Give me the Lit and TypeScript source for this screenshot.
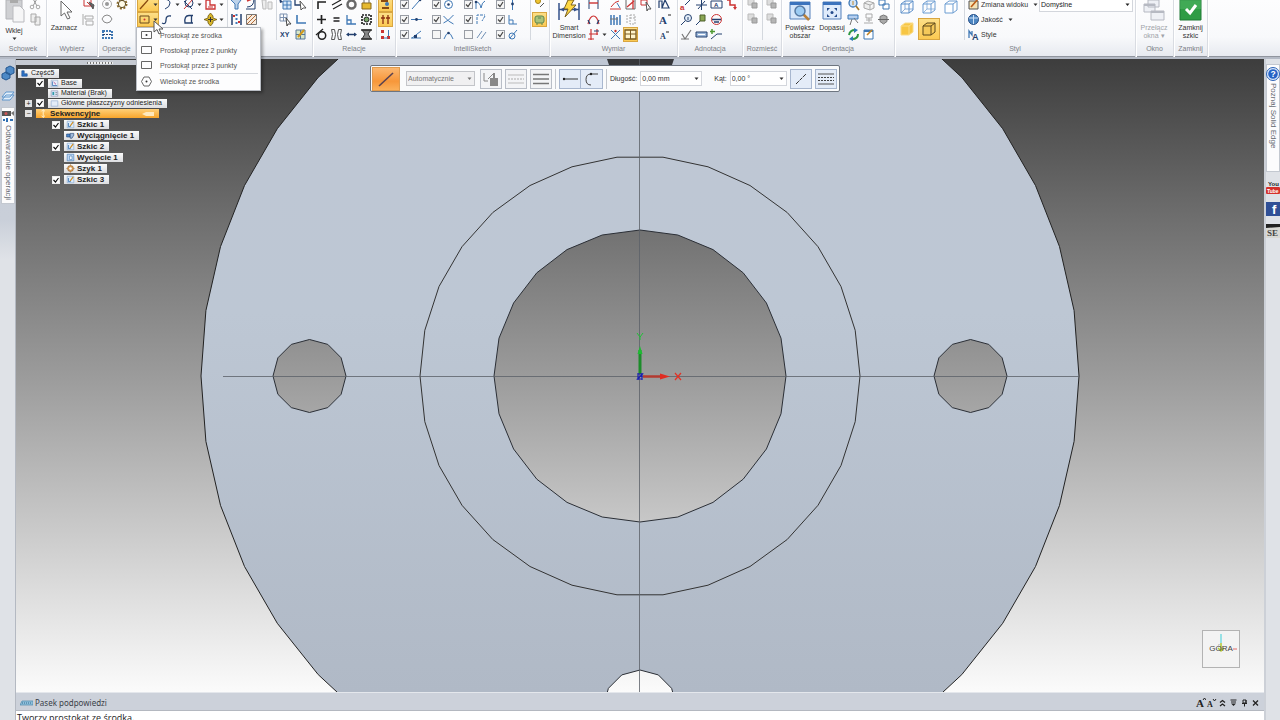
import { LitElement, html, css, svg, nothing } from "lit";
import { customElement } from "lit/decorators.js";
import { classMap } from "lit/directives/class-map.js";

const N = "#24406e";
const B = "#3f78b5";
const R = "#cc3333";

// Glyphs drawn on a 15 x 15 grid.
const glyphs: Record<string, unknown> = {
  none: nothing,
  cut: svg`<path d="M4 0l5 9M10 0L5 9" stroke="#999"/><circle cx="4" cy="10" r="1.8" stroke="#aaa"/><circle cx="10" cy="10" r="1.8" stroke="#aaa"/>`,
  copy: svg`<path d="M3 2h5v8h-5zM7 5h5v8h-5z" fill="#eee" stroke="#aaa"/>`,
  pick: svg`<path d="M3 2h7v7h-7zM6 5l6 6" stroke="${R}"/><path d="M8 5l4 7 1-4z" fill="#666" stroke="#555"/>`,
  stack: svg`<path d="M2 2v11M4 4h8v3h-8zM5 9h7v4h-7z" stroke="#aaa"/>`,
  ring: svg`<circle cx="7" cy="7" r="4.5" stroke="#aaa"/><circle cx="7" cy="7" r="2" fill="#999" stroke="none"/>`,
  gear: svg`<circle cx="7" cy="7" r="4.5" stroke="#8a6a2a" stroke-width="2" stroke-dasharray="2 1.5"/><circle cx="7" cy="7" r="3.6" stroke="#5b4a22" fill="#fffbe8" stroke-width="1"/>`,
  hexa: svg`<path d="M7 3l3 1 2 3-2 3-3 1-3-1-2-3 2-3z" stroke="#888"/>`,
  pattern: svg`<path d="M3 4h9v7h-9z" stroke="${B}" stroke-width="2" stroke-dasharray="2 1"/><path d="M3 7.500h9" stroke="${N}" stroke-dasharray="2 1"/>`,
  line: svg`<path d="M3 12L11 3" stroke="#8a4a10" stroke-width="1.300"/>`,
  rect: svg`<path d="M3 4h9v7h-9z" stroke="#6b4a1c"/><circle cx="7.500" cy="7.500" r="1" fill="${R}" stroke="none"/>`,
  arc: svg`<path d="M3 2q8 0 8 4t-5 6" stroke="${N}"/><path d="M2 1h2v2h-2z" fill="${B}" stroke="none"/>`,
  curve: svg`<path d="M3 11q4 2 4-3t5-4" stroke="${N}" stroke-width="1.300"/>`,
  circ: svg`<circle cx="8" cy="6" r="4" stroke="${N}"/><path d="M3 12l9-10" stroke="${R}"/><path d="M3 4l8 8" stroke="${N}"/>`,
  dee: svg`<path d="M12 3.500h-4q-5 0-4 7.500h8M10.500 4v7" stroke="${N}" stroke-width="1.300"/>`,
  offset: svg`<path d="M3 12v-9h4v5h5v4z" stroke="${R}" stroke-width="1.300"/><path d="M5 10h5" stroke="${R}"/>`,
  move: svg`<path d="M7.500 1l2.500 3v2l4 1.500-4 1.500v2l-2.500 3-2.500-3V9L1 7.500 5 6V4z" fill="#d8b52a" stroke="#6e5a10" stroke-width=".8"/><path d="M5 7.500h5M7.500 5v5" stroke="#333"/>`,
  funnel: svg`<path d="M2 3q5-3 10 0l-3 4v5h-3V7z" fill="#bcd2ea" stroke="${B}"/>`,
  bounds: svg`<path d="M3 2v11M12 2v11" stroke="${N}" stroke-width="1.500"/><path d="M7.500 2v11" stroke="${B}" stroke-width="2" stroke-dasharray="2 2"/><path d="M4 4h2M9 10h2" stroke="${R}" stroke-width="2"/>`,
  fillet: svg`<path d="M2 12h9V3M3 10q7 0 7-8" stroke="${N}"/><path d="M3 4l5-2" stroke="${R}" stroke-width="1.500"/>`,
  hatch: svg`<path d="M2.500 2.500h10v10h-10z" fill="#f7ebdd" stroke="#777"/><path d="M3 8l5-5M3 12l9-9M7 12l5-5" stroke="#b06a3a"/>`,
  planes: svg`<path d="M3 3h4v9h-3zM9 5h4v7h-4z" stroke="#bbb" fill="#eee"/>`,
  tableArrow: svg`<path d="M5 4h8v8h-8zM5 8h8M9 4v8" fill="#d5e6f8" stroke="${B}"/><path d="M1 1l4 4-3 1z" fill="${N}" stroke="none"/>`,
  angleArrow: svg`<path d="M2 2v6h6" stroke="${N}" stroke-width="1.300"/><path d="M7 4l6 7-3 0-2 2z" fill="#fff" stroke="#555"/>`,
  gridArrow: svg`<path d="M2 2h7v7h-7zM5.500 2v7M2 5.500h7" stroke="#7f93b0"/><path d="M8 6l5 6h-3l-1 2z" fill="#fff" stroke="#444"/>`,
  axis: svg`<path d="M4 3v8h9" stroke="${B}" stroke-width="1.600"/>`,
  xy: svg`<text x="2" y="10" font-size="7" font-weight="700" fill="${N}" stroke="none">XY</text>`,
  sketch: svg`<path d="M3 3h9v9h-9zM3 7.500h9M7.500 3v9" fill="#d9e7c9" stroke="#56769a"/><path d="M5 10l6-7" stroke="#d29a1c" stroke-width="2"/>`,
  corner: svg`<path d="M4 12V5h8" stroke="#222" stroke-width="1.600"/>`,
  parallel: svg`<path d="M3 8l9-5M4 12l9-5" stroke="#222" stroke-width="1.200"/>`,
  donut: svg`<circle cx="7.500" cy="7.500" r="4" stroke="#6a6a6a" stroke-width="2.500"/>`,
  lock: svg`<path d="M5 6V2h5v4" stroke="#6a6a6a"/><path d="M3 6h9v6h-9z" fill="#e6ba30" stroke="#896819"/>`,
  plus: svg`<path d="M7.500 3v9M3 7.500h9" stroke="#222" stroke-width="1.700"/>`,
  equals: svg`<path d="M4.500 6h6M4.500 9h6" stroke="#222" stroke-width="1.500"/>`,
  perp: svg`<path d="M3 3v9h9M7 12V8h-4" stroke="${B}" stroke-width="1.300"/>`,
  rigid: svg`<path d="M3 3h9v9h-9z" stroke="#222" stroke-width="1.700" stroke-dasharray="2 1"/><circle cx="7.500" cy="7.500" r="2.500" fill="#79a86a" stroke="#222"/>`,
  tangent: svg`<circle cx="8" cy="8.500" r="3.700" stroke="#222" stroke-width="1.500"/><path d="M2 8l7-6" stroke="#222" stroke-width="1.300"/>`,
  symm: svg`<path d="M2.500 2.500h3l1 5-1 5h-3l1-5zM12.500 2.500h-3l-1 5 1 5h3l-1-5z" stroke="#555"/>`,
  horiz: svg`<path d="M3 7.500h9" stroke="${N}" stroke-width="1.500"/><path d="M2 7.500l3-2v4zM13 7.500l-3-2v4z" fill="${N}" stroke="none"/>`,
  bow: svg`<path d="M3 3h9l-3 4 3 5h-9l3-5z" fill="#888" stroke="#333"/><path d="M2 3h11M2 12h11" stroke="#333" stroke-width="1.500"/>`,
  handles: svg`<path d="M3 4h7M4 11h7" stroke="#8a4a10" stroke-width="2"/><circle cx="9" cy="7" r="2" fill="${B}" stroke="none"/>`,
  updown: svg`<path d="M5 3v9M10 3v9M3 6h4M8 6h4" stroke="#8b2f10" stroke-width="1.300"/>`,
  dots: svg`<path d="M3 3h3v3h-3zM3 9h3v3h-3zM9 9h3v3h-3z" fill="${R}" stroke="none"/><path d="M10.500 3v6M6 11h4" stroke="${B}"/>`,
  endpt: svg`<path d="M3 12l7-8" stroke="${B}"/><circle cx="11" cy="3" r="1.300" fill="${N}" stroke="none"/>`,
  midpt: svg`<path d="M2 7.500h11" stroke="${B}"/><circle cx="7.500" cy="7.500" r="1.400" fill="${N}" stroke="none"/>`,
  onpt: svg`<path d="M3 11l9-7M2 11h10" stroke="${B}"/><path d="M5 8h3v3h-3z" fill="${N}" stroke="none"/>`,
  center: svg`<circle cx="7.500" cy="7.500" r="4" stroke="${B}"/><circle cx="7.500" cy="7.500" r="1.300" fill="${N}" stroke="none"/>`,
  cross: svg`<path d="M2.500 4q5 6 10 8M2.500 11q5-2 10-8" stroke="${B}"/>`,
  hump: svg`<path d="M3 12q4.500-12 9 0" stroke="${B}"/><circle cx="7.500" cy="6" r="1.300" fill="${N}" stroke="none"/>`,
  spline: svg`<path d="M3 12V5q4 0 5 6 1-6 4-7" stroke="${B}"/><circle cx="3" cy="5" r="1.300" fill="${N}" stroke="none"/>`,
  ext: svg`<path d="M4 12V3h8M12 4l-3 5" stroke="${B}" stroke-dasharray="3 1"/>`,
  lines2: svg`<path d="M4 11l5-7M8 12l5-7" stroke="#6f8fb5"/>`,
  vert: svg`<path d="M7.500 1v12" stroke="${B}"/><circle cx="7.500" cy="7" r="1.400" fill="${N}" stroke="none"/>`,
  sq: svg`<path d="M4 3v9h8M4 8h4v4" stroke="${B}"/>`,
  tan2: svg`<circle cx="7" cy="9" r="3" stroke="${B}"/><path d="M5 11l7-8" stroke="${B}"/>`,
  bulb: svg`<circle cx="6" cy="4" r="2.500" fill="#f0c530" stroke="#a8841a"/><path d="M8 10l4-4" stroke="#555"/>`,
  relay: svg`<rect x="3" y="4" width="9" height="7" rx="2" fill="#a9c27a" stroke="#5e8750"/><path d="M5 11v2M10 11v2M6 6h3" stroke="#5e8750"/>`,
  dist: svg`<path d="M3 3v9M12 3v9" stroke="${N}"/><path d="M3 6h9" stroke="${R}" stroke-width="1.400"/>`,
  angDim: svg`<path d="M2 12q2-8 5.500-8t5.500 8" stroke="${R}" stroke-width="1.200"/><path d="M2 8l2 4M13 8l-2 4" stroke="${N}" stroke-width="1.300"/>`,
  coord: svg`<path d="M5 2v11M11 2v6M3 7h9M2 12h6" stroke="${R}" stroke-width="1.200"/><path d="M8 4h5" stroke="${N}"/>`,
  red1: svg`<path d="M2 12h11M3 10q4-6 8-6" stroke="${R}"/><path d="M9 6l3 5" stroke="${B}"/>`,
  red2: svg`<path d="M3 2h9v10h-9z" stroke="#666"/><path d="M4 10l7-6M10 1v11" stroke="${R}" stroke-width="1.300"/>`,
  red3: svg`<path d="M3 3h6v5h-6z" stroke="${R}"/><path d="M8 5l5 7h-3l-1 2z" fill="#fff" stroke="#555"/>`,
  bars: svg`<path d="M3 3v10M6 3v10M9 5v8M12 3v10" stroke="${B}" stroke-width="1.500"/><path d="M2 7h8" stroke="#777"/>`,
  ghost: svg`<path d="M4 3v9M7 6h5M7 3h5v9h-5z" stroke="#aaa" stroke-dasharray="2 1"/>`,
  xdim: svg`<path d="M3 3l9 9M12 3l-9 9" stroke="${B}"/><circle cx="7.500" cy="4" r="1.200" fill="${R}" stroke="none"/>`,
  win: svg`<path d="M2 3h11v9h-11z" fill="#fff4cb" stroke="#7a5a20" stroke-width="1.300"/><path d="M7.500 3v9M2 7h11" stroke="#7a5a20"/>`,
  abc: svg`<path d="M2 11V4h3v7M8 3l4 8h-7z" stroke="${N}" stroke-width="1.200"/>`,
  bigA: svg`<text x="2" y="12" font-size="11" font-weight="700" font-family="Liberation Serif, serif" fill="${N}" stroke="none">A</text><path d="M11 3h3" stroke="#222"/>`,
  smallA: svg`<text x="3" y="12" font-size="8" font-weight="700" font-family="Liberation Serif, serif" fill="${N}" stroke="none">A</text><path d="M9 5h3" stroke="#222"/>`,
  leader: svg`<text x="1" y="13" font-size="8" font-weight="700" fill="${R}" stroke="none">a</text><path d="M6 8l6-6" stroke="${N}"/>`,
  compass: svg`<path d="M2 8h11M7.500 3v10M4 12l7-8" stroke="${N}"/>`,
  frame: svg`<path d="M2 4h11v7h-11z" stroke="${N}"/><text x="5" y="10" font-size="6" font-weight="700" fill="${N}" stroke="none">A</text>`,
  zig: svg`<path d="M3 3h3v5h5v3" stroke="${R}" stroke-width="1.500"/><path d="M9 10h4l-2 3z" fill="${R}" stroke="none"/>`,
  balloon: svg`<circle cx="9" cy="6" r="3.500" fill="#e5effa" stroke="${N}"/><path d="M6 9l-4 4M9 5v3" stroke="${N}"/>`,
  pin: svg`<path d="M6 3h5v6h-5z" fill="#8aa653" stroke="#4c5f2b"/><path d="M6 9l-4 4" stroke="${N}"/>`,
  datum: svg`<circle cx="7.500" cy="7.500" r="5" stroke="${R}"/><path d="M3 7.500h9M5 10h5" stroke="${N}" stroke-width="1.400"/>`,
  surf: svg`<path d="M3 7l3 5 6-9M2 12h8" stroke="#777" stroke-width="1.200"/>`,
  label: svg`<path d="M2 5h11v5h-11z" fill="#9bb6d8" stroke="${N}"/><path d="M4 7.500h7" stroke="#fff"/>`,
  weld: svg`<path d="M2 12l6-5h5" stroke="${N}"/><path d="M3 2v5M1 4.500h5" stroke="#4f9a32" stroke-width="1.500"/>`,
  layer: svg`<path d="M3 2h6v6h-6z" fill="#ddd" stroke="#bbb"/><path d="M7 6h5v5h-5z" fill="#b5b5b5" stroke="#999"/>`,
  zoomGlass: svg`<circle cx="7" cy="6" r="4" fill="#cfe3f8" stroke="${B}" stroke-width="1.300"/><path d="M10 9l3 4" stroke="#a77a2b" stroke-width="1.700"/><path d="M7 4v4" stroke="#c48a2b"/>`,
  greybox: svg`<path d="M3 6l4-2 6 2-4 2zM3 6v5l6 2V8M9 13l4-2V6" fill="#eee" stroke="#aaa"/>`,
  views: svg`<path d="M3 3h6v5h-6zM7 7h6v5h-6z" fill="#fff" stroke="${B}"/>`,
  table: svg`<path d="M2 3h10v4h-10z" fill="#b5cff0" stroke="${B}"/><path d="M6 7l-2 6M8 6l4 5" stroke="#777"/>`,
  chairs: svg`<path d="M5 2h6v4h-6zM3 11h9M8 6v4M5 8h6" stroke="#aaa"/>`,
  orbit: svg`<path d="M7.500 3l3.500 1.500v5l-3.500 2.500-3.500-2.500v-5z" fill="#aaa" stroke="#777"/><path d="M2 7.500h11" stroke="#666"/>`,
  spin: svg`<path d="M3 8q1-5 6-5M12 7q0 5-6 5" stroke="#2f9842" stroke-width="2"/><path d="M8 1l4 2-4 3zM7 9l-4 3 4 2z" fill="#2f79b5" stroke="none"/>`,
  paint: svg`<path d="M3 3h9v9h-9z" fill="#fff" stroke="${B}"/><path d="M3 4h9" stroke="${B}" stroke-width="2"/><path d="M6 8l5-5" stroke="#c28222" stroke-width="1.600"/>`,
  viewSet: svg`<path d="M3 4h9v8h-9z" fill="#f5e3b5" stroke="#555"/><path d="M5 10l7-8" stroke="#bc5c18" stroke-width="1.600"/>`,
  globe: svg`<circle cx="7.500" cy="7.500" r="5" fill="#4d86c2" stroke="#274f87"/><path d="M7.500 3v9M3 6h9" stroke="#cfe2f7"/>`,
  styleA: svg`<text x="6" y="13" font-size="9" font-weight="700" fill="${N}" stroke="none">A</text><path d="M3 11V4l3 4V4" stroke="${B}" stroke-width="1.300"/>`,
  mRect: svg`<path d="M2.500 3.500h10v7h-10z" stroke="#666"/>`,
  mRectC: svg`<path d="M2.500 3.500h10v7h-10z" stroke="#666"/><circle cx="7.500" cy="7" r="1" fill="#333" stroke="none"/>`,
  mHex: svg`<path d="M5 3h5l2.500 4.500-2.500 4.500h-5L2.500 7.500z" stroke="#666"/><circle cx="7.500" cy="7.500" r="1" fill="#333" stroke="none"/>`,
  part: svg`<path d="M3 3h4v5h5v4h-9z" fill="#2d72c4" stroke="#1a4d94"/>`,
  base: svg`<path d="M2 2h11v11h-11z" fill="#e6eefa" stroke="#8fa7c8"/><path d="M4 11V4M4 11h8" stroke="${B}" stroke-width="1.500"/><path d="M6 5l4 4" stroke="#b0458a" stroke-width="1.500"/>`,
  mat: svg`<path d="M2 3h11v9h-11z" fill="#dceafb" stroke="#88a"/><path d="M4 5h3v5h-3z" fill="#39a" stroke="none"/><path d="M9 6h3M9 9h3" stroke="#555"/>`,
  plane: svg`<path d="M2 3h11v9h-11z" fill="#e4ecf8" stroke="#8ba6cf"/>`,
  sk: svg`<path d="M2 2h11v11h-11z" fill="#dcebfb" stroke="#7fa4cf"/><path d="M4 11V5M4 11h4" stroke="${B}" stroke-width="1.500"/><path d="M7 10l5-7" stroke="#d18c1f" stroke-width="2"/>`,
  extrude: svg`<path d="M1 5h6v5h-6z" fill="#4b87ca" stroke="#1e3f72"/><path d="M7 4h6v3l-3 5h-3z" fill="#9fb9d9" stroke="#1e3f72"/>`,
  cutout: svg`<path d="M2 2h11v11h-11z" fill="#bed6f3" stroke="${B}"/><path d="M6 5h4v6h-4z" fill="#fff" stroke="${B}"/>`,
  ptn: svg`<path d="M7.500 1l2 2.500h2v2L14 7.500l-2.500 2v2h-2l-2 2.500-2-2.500h-2v-2L1 7.500l2.500-2v-2h2z" fill="#d39a55" stroke="#94602a" stroke-width=".8"/><circle cx="7.500" cy="7.500" r="2.200" fill="#fff" stroke="none"/>`,
  seq: svg`<path d="M7 1v13M4 4l3-3 3 3M4 11l3 3 3-3" stroke="#fff2cf" stroke-width="1.600"/>`,
};

const icon = (name: string, cls = "ic") =>
  html`<svg class=${cls} viewBox="0 0 15 15" fill="none" aria-hidden="true">${glyphs[name]}</svg>`;
const caret = html`<svg class="caret" viewBox="0 0 7 7" aria-hidden="true"><path d="M1.500 2.500h4l-2 2.500z" fill="currentColor" /></svg>`;

const poly = (cx: number, cy: number, r: number, n: number) =>
  Array.from({ length: n }, (_, i) => {
    const a = (i * 2 * Math.PI) / n;
    return `${(cx + r * Math.cos(a)).toFixed(1)},${(cy + r * Math.sin(a)).toFixed(1)}`;
  }).join(" ");

const common = css`
  * { box-sizing: border-box; }
  button, select, input { font: inherit; color: inherit; margin: 0; padding: 0; }
  button { border: 0; background: none; display: block; }
  .ic { display: block; width: 15px; height: 15px; flex: none; stroke-width: 1; }
  .caret { display: block; width: 7px; height: 7px; flex: none; }
  .pick { position: relative; display: flex; align-items: center; }
  .pick select { appearance: none; width: 100%; height: 100%; border: 1px solid #d3d6dc; border-radius: 0; background: #fff; padding: 0 8px 0 1px; }
  .pick .caret { position: absolute; right: 2px; pointer-events: none; }
`;

type Cell = string | { i: string; on?: boolean; drop?: boolean; check?: boolean };

@customElement("se-ribbon")
class SeRibbon extends LitElement {
  static styles = [common, css`
    :host { display: flex; height: 59px; overflow: hidden; color: #333; border-bottom: 2px solid #b4bac5; background: linear-gradient(#fdfdfe, #f8f9fb 65%, #e6e9ef); box-shadow: inset 0 -1px #90959e; }
    .group { flex: none; display: flex; flex-direction: column; justify-content: flex-end; border-right: 1px solid #d9dce2; box-shadow: 1px 0 #fff; }
    .body { flex: none; display: flex; align-items: flex-end; height: 45px; }
    .title { flex: none; height: 15px; line-height: 13px; text-align: center; color: #7b7e85; white-space: nowrap; }
    .w34 { width: 34px; } .w38 { width: 38px; } .w39 { width: 39px; } .w47 { width: 47px; }
    .w51 { width: 51px; } .w65 { width: 65px; } .w83 { width: 83px; } .w113 { width: 113px; }
    .w128 { width: 128px; } .w154 { width: 154px; } .w177 { width: 177px; } .w241 { width: 241px; }
    .p1 .body { padding-left: 1px; } .p2 .body { padding-left: 2px; } .p4 .body { padding-left: 4px; }
    .col { display: flex; flex-direction: column; }
    .cell { display: flex; align-items: center; height: 15px; min-width: 15px; }
    .col.pair .cell { width: 32px; }
    .col.wide .cell { width: 22px; }
    .on { background: linear-gradient(#fde08a, #fbc84f); box-shadow: inset 0 0 0 1px #d9a640; }
    .sep { width: 1px; height: 40px; background: #d4d8de; margin: 0 1px 2px 2px; }
    input { appearance: none; width: 9px; height: 9px; border: 1px solid #999da5; background: #f6f6f6; flex: none; }
    .tick { position: relative; display: flex; }
    .tick svg { position: absolute; inset: 0; width: 9px; height: 9px; pointer-events: none; }
    .big { height: 45px; padding-top: 3px; display: flex; flex-direction: column; align-items: center; line-height: 8px; white-space: nowrap; }
    .big svg.art { width: 24px; height: 24px; flex: none; }
    .big.low svg.art { height: 27px; }
    .b28 { width: 28px; } .b34 { width: 34px; } .b36 { width: 36px; }
    .off { color: #a0a3a9; }
    .gallery { display: grid; grid-template-columns: repeat(3, 22px); padding-bottom: 2px; }
    .gallery button { width: 22px; height: 22px; display: grid; place-items: center; }
    .gallery svg { width: 18px; height: 18px; }
    .texts { width: 73px; }
    .texts .cell { white-space: nowrap; }
    .texts .caret { margin-left: 4px; }
    .pick { width: 94px; height: 15px; margin-bottom: 30px; color: #222; }
  `];

  cell(c: Cell, wide = false) {
    const o = typeof c === "string" ? { i: c } as Exclude<Cell, string> : c;
    if (o.check !== undefined) {
      return html`<label class="cell"><span class="tick"><input type="checkbox" .checked=${o.check} aria-label=${o.i} />
        ${o.check ? html`<svg viewBox="0 0 9 9" fill="none"><path d="M2 4.500l2 2 3-4.500" stroke="#444" stroke-width="1.200" /></svg>` : nothing}</span>${icon(o.i)}</label>`;
    }
    if (o.i === "none") return html`<span class="cell"></span>`;
    return html`<button class=${classMap({ cell: true, on: !!o.on })} aria-label=${o.i}>${icon(o.i)}${wide && o.drop !== false ? caret : nothing}</button>`;
  }
  col(cells: Cell[], kind = "") {
    return html`<div class="col ${kind}">${cells.map((c) => this.cell(c, kind === "wide"))}</div>`;
  }
  group(title: string, cls: string, body: unknown) {
    return html`<section class="group ${cls}"><div class="body">${body}</div><div class="title">${title}</div></section>`;
  }
  cube(fill: string, edge: string, hidden: boolean) {
    return html`<svg viewBox="0 0 18 18" fill=${fill} stroke=${edge} stroke-linejoin="round"><path d="M3 6l4-3h8v9l-4 3H3z" /><path d="M3 6h8v9M11 6l4-3" fill="none" />${hidden ? svg`<path d="M7 3v8h8M7 11l-4 4" fill="none" stroke-width=".7" />` : nothing}</svg>`;
  }

  render() {
    const sep = html`<span class="sep"></span>`;
    const ck = (i: string, check = true) => ({ i, check });
    return html`
      ${this.group("Schowek", "w47", html`
        <button class="big low b28"><svg class="art" viewBox="0 0 24 27"><path d="M4 0h16v19H4z" fill="#cfd0d3" stroke="#b3b4b8" /><path d="M8 0h8v3H8z" fill="#aaa" /><path d="M11 6h7l4 4v12H11z" fill="#f6f6f7" stroke="#b9babe" /></svg>Wklej${caret}</button>
        ${this.col(["cut", "copy", "none"])}`)}
      ${this.group("Wybierz", "w51", html`
        <button class="big b34"><svg class="art" viewBox="0 0 24 24"><path d="M9 1v15l3.500-3 3 6 2.500-1-3-6h5z" fill="#fff" stroke="#666" /></svg>Zaznacz</button>
        ${this.col(["pick", "stack", "none"])}`)}
      ${this.group("Operacje", "w38 p2", html`${this.col(["ring", "hexa", "pattern"])}${this.col(["gear", "none", "none"])}`)}
      ${this.group("", "w177 p1", html`
        ${this.col([{ i: "line", on: true }, { i: "rect", on: true }, "none"], "wide")}
        ${this.col(["arc", { i: "curve", drop: false }, "none"], "wide")}
        ${this.col(["circ", { i: "dee", drop: false }, "none"], "wide")}
        ${this.col(["offset", "move", "none"], "wide")}${sep}
        ${this.col(["funnel", "bounds", "none"])}${this.col(["fillet", "hatch", "none"])}${this.col(["planes", "none", "none"])}${sep}
        ${this.col(["tableArrow", "gridArrow", "xy"])}${this.col(["angleArrow", "axis", "sketch"])}`)}
      ${this.group("Relacje", "w83 p1", html`
        ${this.col(["corner", "plus", "tangent"])}${this.col(["parallel", "equals", "symm"])}
        ${this.col(["donut", "perp", "horiz"])}${this.col(["lock", "rigid", "bow"])}${sep}
        ${this.col([{ i: "handles", on: true }, { i: "updown", on: true }, "dots"])}`)}
      ${this.group("IntelliSketch", "w154 p4", html`
        ${this.col([ck("endpt"), ck("midpt"), ck("onpt")], "pair")}
        ${this.col([ck("center"), ck("cross"), ck("hump", false)], "pair")}
        ${this.col([ck("spline"), ck("ext"), ck("lines2", false)], "pair")}
        ${this.col([ck("vert"), ck("sq"), ck("tan2")], "pair")}${sep}
        ${this.col(["bulb", { i: "relay", on: true }, "none"])}`)}
      ${this.group("Wymiar", "w128 p2", html`
        <button class="big b34"><svg class="art" viewBox="0 0 24 24"><path d="M2 3v17M22 3v17M2 9.500h20" stroke="#34518b" stroke-width="1.500" /><path d="M3 9.500l4-2v4zM21 9.500l-4-2v4z" fill="#34518b" /><path d="M11 0h6l-3 5h5L8 17l3-8H7z" fill="#ffd843" stroke="#7b6220" /></svg>Smart<br />Dimension</button>
        ${this.col([{ i: "dist", drop: false }, { i: "angDim", drop: false }, "coord"], "wide")}
        ${this.col(["red1", "bars", "xdim"])}${this.col(["red2", "ghost", { i: "win", on: true }])}${this.col(["red3", "none", "none"])}${sep}
        ${this.col(["abc", "bigA", "smallA"])}`)}
      ${this.group("Adnotacja", "w65 p1", html`
        ${this.col(["leader", "balloon", "surf"])}${this.col(["compass", "pin", "label"])}
        ${this.col(["frame", "datum", "weld"])}${this.col(["zig", "none", "none"])}`)}
      ${this.group("Rozmieść", "w39 p2", html`${this.col(["layer", "layer", "none"])}${sep}${this.col(["layer", "layer", "none"])}`)}
      ${this.group("Orientacja", "w113", html`
        <button class="big b36"><svg class="art" viewBox="0 0 24 24"><path d="M2 2h20v17H2z" fill="#d6e6fa" stroke="#5580bb" /><path d="M2 2h20v3H2z" fill="#3c73bd" /><path d="M15 14l6 6" stroke="#b8803a" stroke-width="2.500" /><circle cx="12" cy="11" r="5" fill="#9ccbf3" stroke="#577aa4" stroke-width="1.500" /></svg>Powiększ<br />obszar</button>
        <button class="big b28"><svg class="art" viewBox="0 0 24 24"><path d="M3 2h18v17H3z" fill="#dfebfb" stroke="#5580bb" /><path d="M3 2h18v3H3z" fill="#3c73bd" /><path d="M7 8h3L7 11zM17 8v3l-3-3zM7 17v-3l3 3zM17 17h-3l3-3z" fill="#244b8c" /><circle cx="12" cy="12.500" r="1.500" fill="#244b8c" /></svg>Dopasuj</button>
        ${this.col(["zoomGlass", "table", "spin"])}${this.col(["greybox", "chairs", "paint"])}${this.col(["views", "orbit", "none"])}`)}
      ${this.group("Styl", "w241 p1", html`
        <div class="gallery">
          <button aria-label="wire">${this.cube("none", "#5b8ec9", true)}</button>
          <button aria-label="hidden">${this.cube("none", "#6d9dd2", true)}</button>
          <button aria-label="visible">${this.cube("#fff", "#6d9dd2", false)}</button>
          <button aria-label="shaded">${this.cube("#f7c644", "#fbdc88", false)}</button>
          <button class="on" aria-label="edges">${this.cube("#f5c95a", "#5d491c", false)}</button>
        </div>${sep}
        <div class="col texts">
          <button class="cell">${icon("viewSet")}Zmiana widoku${caret}</button>
          <button class="cell">${icon("globe")}Jakość${caret}</button>
          <button class="cell">${icon("styleA")}Style</button>
        </div>
        <div class="pick"><select aria-label="Styl"><option>Domyślne</option></select>${caret}</div>`)}
      ${this.group("Okno", "w38", html`
        <button class="big b36 off"><svg class="art" viewBox="0 0 24 24" fill="#eef0f5" stroke="#b6b9c2"><path d="M6 0h11v7H6zM2 4h11v8H2zM9 11h13v9H9z" /><path d="M2 5h11M9 12h13" stroke-width="2" /></svg>Przełącz<br />okna ▾</button>`)}
      ${this.group("Zamknij", "w34", html`
        <button class="big b34"><svg class="art" viewBox="0 0 24 24"><path d="M1 0h21v20H1z" fill="#2f9c45" stroke="#1f7a34" /><path d="M1 0h21v9H1z" fill="#51b765" opacity=".5" /><path d="M7 9l4 4 6-8" fill="none" stroke="#fff" stroke-width="3" /></svg>Zamknij<br />szkic</button>`)}
    `;
  }
}

interface Node { t: string; i: string; lvl: number; exp?: string; check?: boolean; bold?: boolean; sel?: boolean }

@customElement("se-tree")
class SeTree extends LitElement {
  static nodes: Node[] = [
    { t: "Część5", i: "part", lvl: 0 },
    { t: "Base", i: "base", lvl: 1, check: true },
    { t: "Materiał (Brak)", i: "mat", lvl: 1 },
    { t: "Główne płaszczyzny odniesienia", i: "plane", lvl: 1, exp: "+", check: true },
    { t: "Sekwencyjne", i: "seq", lvl: 1, exp: "−", bold: true, sel: true },
    { t: "Szkic 1", i: "sk", lvl: 2, check: true, bold: true },
    { t: "Wyciągnięcie 1", i: "extrude", lvl: 2, bold: true },
    { t: "Szkic 2", i: "sk", lvl: 2, check: true, bold: true },
    { t: "Wycięcie 1", i: "cutout", lvl: 2, bold: true },
    { t: "Szyk 1", i: "ptn", lvl: 2, bold: true },
    { t: "Szkic 3", i: "sk", lvl: 2, check: true, bold: true },
  ];
  static styles = [common, css`
    :host { display: block; color: #222; }
    .grip { height: 5px; width: 160px; background: #c6cad2; display: grid; place-items: center; padding-left: 8px; }
    .grip i { width: 26px; height: 2px; background: repeating-linear-gradient(90deg, #777 0 1px, #eee 1px 3px); }
    ul { list-style: none; margin: 0; padding: 3px 0 0; }
    li { display: flex; align-items: center; height: 10px; white-space: nowrap; }
    .l0 { padding-left: 2px; } .l1 { padding-left: 8px; } .l2 { padding-left: 24px; }
    .bold { height: 11px; font-size: 8px; font-weight: 700; }
    .slot { width: 12px; display: flex; flex: none; }
    .slot button { width: 7px; height: 7px; margin-left: 1px; font-size: 7px; line-height: 7px; font-weight: 400; background: #e3e3e3; color: #222; text-align: center; }
    .tick { position: relative; width: 8px; height: 8px; }
    input { appearance: none; display: block; width: 8px; height: 8px; background: #fff; border: 1px solid #eee; }
    .tick svg { position: absolute; inset: 0; pointer-events: none; }
    .chip { display: flex; align-items: center; gap: 1px; height: 9px; padding: 0 5px 0 1px; background: linear-gradient(#fafafa, #dcdde0); }
    .chip .ic { width: 11px; height: 9px; }
    .sel .chip { width: 123px; background: linear-gradient(#ffd079, #f8a52b); padding-left: 2px; }
    .sel .end { margin-left: auto; width: 12px; height: 6px; display: block; }
  `];
  render() {
    return html`<div class="grip"><i></i></div><ul>${SeTree.nodes.map((n) => html`
      <li class=${classMap({ ["l" + n.lvl]: true, bold: !!n.bold, sel: !!n.sel })}>
        ${n.lvl ? html`<span class="slot">${n.exp ? html`<button>${n.exp}</button>` : nothing}</span>` : nothing}
        ${n.lvl && !n.sel ? html`<span class="slot">${n.check ? html`<span class="tick"><input type="checkbox" checked aria-label=${n.t} /><svg viewBox="0 0 8 8" fill="none"><path d="M1.500 4l2 2 3-4" stroke="#111" stroke-width="1.200" /></svg></span>` : nothing}</span>` : nothing}
        <span class="chip">${icon(n.i)}${n.t}${n.sel ? html`<svg class="end" viewBox="0 0 12 6"><path d="M0 3l4-2h8v4H4z" fill="#ffe9bd" /></svg>` : nothing}</span>
      </li>`)}</ul>`;
  }
}

@customElement("se-command-bar")
class SeCommandBar extends LitElement {
  static styles = [common, css`
    :host { display: flex; align-items: center; height: 27px; gap: 3px; padding: 0 2px 0 1px; background: #fafbfc; border: 1px solid #6d7580; border-radius: 2px; color: #333; }
    button { width: 22px; height: 20px; border: 1px solid #b9bec7; background: #f3f4f6; display: grid; place-items: center; }
    button svg { width: 18px; height: 16px; fill: none; }
    .cmd { width: 28px; height: 24px; border: 1px solid #e09a4c; background: linear-gradient(#fbb871, #f7973a 60%, #fbb05a); margin-right: 3px; }
    .cmd svg { width: 22px; height: 20px; }
    .blue { background: #e4ecf8; border-color: #a8b7cf; }
    .toggle { display: flex; }
    .toggle button + button { border-left: 0; }
    .sep { width: 1px; height: 20px; background: #c3c7cd; }
    .pick { height: 15px; }
    .auto { width: 69px; color: #777; margin-right: 2px; }
    .auto select { background: #f0f0f1; border-color: #c3c5c9; }
    .len { width: 62px; margin-right: 9px; }
    .ang { width: 57px; }
  `];
  render() {
    return html`
      <button class="cmd" aria-label="Linia"><svg viewBox="0 0 22 20"><path d="M4 17L18 4" stroke="#5a4250" stroke-width="1.600" /></svg></button>
      <div class="pick auto"><select aria-label="Kolor"><option>Automatycznie</option></select>${caret}</div>
      <button aria-label="Kolor linii"><svg viewBox="0 0 18 16"><path d="M2 2v8h4M6 8l6-6" stroke="#888" /><path d="M8 7h8v8H8z" fill="#888" /><path d="M12 2v5" stroke="#888" stroke-width="2" /></svg></button>
      <button aria-label="Typ linii"><svg viewBox="0 0 18 16"><path d="M1 4h16M1 12h16" stroke="#bbb" /><path d="M1 8h16" stroke="#aaa" stroke-dasharray="2 1" /></svg></button>
      <button aria-label="Grubość"><svg viewBox="0 0 18 16"><path d="M1 3.500h16M1 8h16M1 12.500h16" stroke="#777" stroke-width="1.500" /></svg></button>
      <span class="sep"></span>
      <div class="toggle">
        <button class="blue" aria-label="Odcinek"><svg viewBox="0 0 18 16"><path d="M2 8h15" stroke="#333" /><circle cx="3" cy="8" r="1.200" fill="#222" /></svg></button>
        <button class="blue" aria-label="Łuk"><svg viewBox="0 0 18 16"><path d="M15 3H8Q3 3 3 8.500T8 14" stroke="#444" /><circle cx="8" cy="3" r="1.200" fill="#222" /></svg></button>
      </div>
      <span class="sep"></span>
      <label for="len">Długość:</label>
      <div class="pick len"><select id="len"><option>0,00 mm</option></select>${caret}</div>
      <label for="ang">Kąt:</label>
      <div class="pick ang"><select id="ang"><option>0,00 °</option></select>${caret}</div>
      <button class="blue" aria-label="Rzut"><svg viewBox="0 0 18 16"><path d="M4 13L14 3" stroke="#333" stroke-dasharray="4 1" /></svg></button>
      <button class="blue" aria-label="Konstrukcja"><svg viewBox="0 0 18 16"><path d="M1 3h16M1 13h16" stroke="#555" /><path d="M1 6.500h16M1 9.500h16" stroke="#444" stroke-dasharray="2 1" /></svg></button>
    `;
  }
}

@customElement("se-model")
class SeModel extends LitElement {
  static styles = css`
    :host { display: block; }
    svg { display: block; width: 100%; height: 100%; }
  `;
  render() {
    const holes: [number, number, number, number][] = [[640, 376, 146, 24], [309.5, 376, 36.5, 12], [970.5, 376, 36.5, 12], [640, 706.5, 36.5, 12]];
    return html`<svg viewBox="16 59 1248 633" preserveAspectRatio="xMidYMid slice" role="img" aria-label="Model">
      <defs>
        <linearGradient id="sky" gradientUnits="userSpaceOnUse" x1="0" y1="59" x2="0" y2="692">
          <stop offset="0" stop-color="#3d3d3d" /><stop offset=".25" stop-color="#6e6e6e" /><stop offset=".5" stop-color="#9b9b9b" /><stop offset=".75" stop-color="#cbcbcb" /><stop offset="1" stop-color="#fbfbfb" />
        </linearGradient>
        <linearGradient id="face" gradientUnits="userSpaceOnUse" x1="0" y1="59" x2="0" y2="692">
          <stop offset="0" stop-color="#bfc7d4" /><stop offset=".4" stop-color="#bdc7d4" /><stop offset="1" stop-color="#b0b9c6" />
        </linearGradient>
      </defs>
      <rect x="16" y="59" width="1248" height="633" fill="url(#sky)" />
      <polygon points=${poly(640, 376, 439, 42)} fill="url(#face)" stroke="#222" />
      <path d="M607 59l2 6 3 1h56l4-1 2-6z" fill="#36373a" />
      ${holes.map(([x, y, r, n]) => svg`<polygon points=${poly(x, y, r, n)} fill="url(#sky)" stroke="#2b2f36" />`)}
      <polygon points=${poly(640, 376, 220, 30)} fill="none" stroke="#333" />
      <path d="M223 376.500H1079M639.500 59V692" stroke="#5c6168" stroke-width=".8" fill="none" />
      <path d="M640 374V350" stroke="#1c8c2a" stroke-width="3" /><path d="M640 346l-2.500 8h5z" fill="#1dbb32" />
      <path d="M637 333l3 4 3-4M640 336v4" stroke="#1fc236" fill="none" />
      <path d="M643 376.500h18" stroke="#b33a30" stroke-width="2.500" /><path d="M670 376.500l-10-3v6z" fill="#e02c22" />
      <path d="M675 373l6 7M681 373l-6 7" stroke="#e33225" stroke-width="1.200" />
      <path d="M637.500 374h5l-5 5h5M638 373v7M642 373v7" stroke="#1a1fb0" stroke-width="1.200" fill="none" />
    </svg>`;
  }
}

@customElement("app-root")
class AppRoot extends LitElement {
  static styles = [common, css`
    :host { display: flex; flex-direction: column; height: 100vh; overflow: hidden; position: relative; font: 7px/10px "Liberation Sans", Arial, sans-serif; background: #e1e4e9; }
    .main { flex: 1; display: flex; min-height: 0; }
    .side { width: 16px; flex: none; display: flex; flex-direction: column; align-items: center; background: #dfe2e7; color: #666b73; font-size: 8px; }
    .left { border-right: 1px solid #b4b9c2; padding-top: 4px; background: linear-gradient(#c5ccd8, #c9cfd9 160px, #dfe2e7 200px); }
    .left > svg { width: 14px; height: 22px; flex: none; }
    .right { padding-top: 5px; border-left: 2px solid #ccd0d7; gap: 8px; }
    .right > svg { width: 14px; height: 14px; flex: none; }
    .tab { width: 14px; display: flex; flex-direction: column; align-items: center; gap: 2px; background: #fcfcfd; border: 1px solid #c3c8d0; }
    .tab span { writing-mode: vertical-rl; line-height: 12px; white-space: nowrap; }
    .tab svg { width: 14px; height: 14px; flex: none; }
    .left .tab { padding: 1px 0 3px; }
    .right .tab { padding: 2px 0 23px; }
    .center { flex: 1; min-width: 0; display: flex; flex-direction: column; }
    .view { flex: 1; min-height: 0; position: relative; overflow: hidden; }
    se-model { height: 100%; }
    se-tree { position: absolute; left: 0; top: 1px; }
    se-command-bar { position: absolute; left: 354px; top: 6px; }
    .orient { position: absolute; right: 24px; bottom: 24px; width: 38px; height: 38px; border: 1px solid #b3b3b3; background: #f3f3f3; display: grid; place-items: center; font-size: 8px; color: #444; }
    .orient span, .orient svg { grid-area: 1 / 1; }
    .orient svg { width: 36px; height: 36px; }
    .hint { flex: none; height: 19px; display: flex; align-items: center; gap: 2px; padding: 2px 3px 0 4px; background: #ccd1da; border-top: 1px solid #e4e7ec; border-bottom: 1px solid #b4b8c0; font-size: 8px; color: #3a3f48; font-family: "Noto Sans", "Open Sans", sans-serif; }
    .hint .kb { width: 13px; height: 6px; }
    .hint .tools { margin-left: auto; display: flex; }
    .hint .tools button { width: 11px; height: 12px; display: grid; place-items: center; color: #222; }
    .hint .tools svg { width: 11px; height: 11px; }
    .msg { flex: none; height: 9px; overflow: hidden; background: #fff; padding-left: 1px; color: #222; font: 9px/13px "Open Sans", "Noto Sans", sans-serif; }
    .menu { position: absolute; left: 136px; top: 27px; width: 125px; margin: 0; padding: 0 0 1px; background: #fdfdfe; border: 1px solid #b9bdc4; box-shadow: 2px 2px 3px #0005; color: #555; }
    .menu button { display: flex; align-items: center; gap: 6px; width: 100%; height: 15px; padding-left: 2px; text-align: left; }
    .menu hr { height: 1px; border: 0; margin: 0 2px 0 22px; background: #d6d9de; }
    .cursor { position: absolute; left: 152px; top: 20px; width: 12px; height: 16px; }
  `];
  render() {
    const tool = (name: string, art: unknown) => html`<button aria-label=${name}><svg viewBox="0 0 11 11" fill="none" stroke="#222">${art}</svg></button>`;
    return html`
      <se-ribbon></se-ribbon>
      <div class="main">
        <nav class="side left">
          <svg viewBox="0 0 14 22"><path d="M5 5l4-2 4 2v5l-4 2-4-2zM1 11l4-2 4 2v4l-4 2-4-2z" fill="#4d89c6" stroke="#245790" /></svg>
          <svg viewBox="0 0 14 22" fill="#e5f0fb" stroke="#5f96cc"><path d="M1 15l4-5h8l-4 5zM1 12l4-5h8l-4 5z" /></svg>
          <div class="tab"><svg viewBox="0 0 14 14"><path d="M1 2h9v5H1z" fill="#555" /><path d="M10 4l3-2v5z" fill="#777" /><circle cx="5" cy="4.500" r="1.500" fill="#c55" /><path d="M2 11h2M6 9v4M9 11h3" stroke="#2f6fb3" stroke-width="2" /></svg><span>Odtwarzanie operacji</span></div>
        </nav>
        <div class="center">
          <div class="view">
            <se-model></se-model>
            <se-tree></se-tree>
            <se-command-bar></se-command-bar>
            <div class="orient"><svg viewBox="0 0 36 36" fill="none"><path d="M18 3v9" stroke="#7adbe0" stroke-width="1.500" /><path d="M18 12v8M15 17l3 3 3-3" stroke="#b5c832" stroke-width="1.500" /><path d="M30 18h4" stroke="#e56a6a" /></svg><span>GÓRA</span></div>
          </div>
          <div class="hint"><svg class="kb" viewBox="0 0 13 6"><path d="M0 5l2-4h11v4z" fill="#8fc1dc" stroke="#4b86ab" stroke-width=".7" /><path d="M2 3h10" stroke="#34688e" stroke-dasharray="1 1" /></svg>Pasek podpowiedzi
            <div class="tools">
              ${tool("Powiększ", svg`<text x="1" y="10" font-size="11" font-weight="700" font-family="Liberation Serif, serif" fill="#222" stroke="none">A</text><path d="M8 3l1.500-2L11 3" />`)}
              ${tool("Pomniejsz", svg`<text x="1" y="10" font-size="8" font-weight="700" font-family="Liberation Serif, serif" fill="#222" stroke="none">A</text><path d="M7 2l1.500 2L10 2" />`)}
              ${tool("Zwiń", svg`<path d="M3 5.500l2.500-2 2.500 2M3 9l2.500-2L8 9" stroke-width="1.300" />`)}
              ${tool("Opcje", svg`<path d="M2.500 3h6M3 5h5" stroke-width="1.200" /><path d="M3 6.500h5l-2.500 2.500z" fill="#222" stroke="none" />`)}
              ${tool("Przypnij", svg`<path d="M4 3h3v3h-3zM3 6.500h5M5.500 6v3.500M7 3v3" />`)}
              ${tool("Zamknij", svg`<path d="M3 3.500l5 5M8 3.500l-5 5" stroke-width="1.300" />`)}
            </div>
          </div>
          <div class="msg">Tworzy prostokąt ze środka.</div>
        </div>
        <nav class="side right">
          <div class="tab"><svg viewBox="0 0 14 14"><circle cx="7" cy="7" r="6.500" fill="#dceafc" stroke="#2c62b5" /><circle cx="7" cy="7" r="4.800" fill="#2663c6" /><text x="4.500" y="10" font-size="8.500" font-weight="700" fill="#fff">?</text></svg><span>Poznaj Solid Edge</span></div>
          <svg viewBox="0 0 14 14"><text x="2" y="6" font-size="6" font-weight="700" fill="#222">You</text><rect y="7" width="14" height="7" rx="1" fill="#d5302b" /><text x="1" y="12.500" font-size="5" font-weight="700" fill="#fff">Tube</text></svg>
          <svg viewBox="0 0 14 14"><rect width="14" height="14" fill="#2f4f96" /><text x="6" y="12" font-size="13" font-weight="700" fill="#fff">f</text></svg>
          <svg viewBox="0 0 14 14"><rect width="14" height="14" fill="#d9d9d4" /><path d="M0 0h14v3L0 4z" fill="#222" /><text x="1" y="12" font-size="9" font-weight="700" font-family="Liberation Serif, serif" fill="#444">SE</text></svg>
        </nav>
      </div>
      <div class="menu" role="menu">
        <button role="menuitem">${icon("mRectC")}Prostokąt ze środka</button>
        <button role="menuitem">${icon("mRect")}Prostokąt przez 2 punkty</button>
        <button role="menuitem">${icon("mRect")}Prostokąt przez 3 punkty</button>
        <hr />
        <button role="menuitem">${icon("mHex")}Wielokąt ze środka</button>
      </div>
      <svg class="cursor" viewBox="0 0 12 16"><path d="M2 1v11l3-2.500 2 4.500 2-1-2-4h4z" fill="#fff" stroke="#555" /></svg>
    `;
  }
}
